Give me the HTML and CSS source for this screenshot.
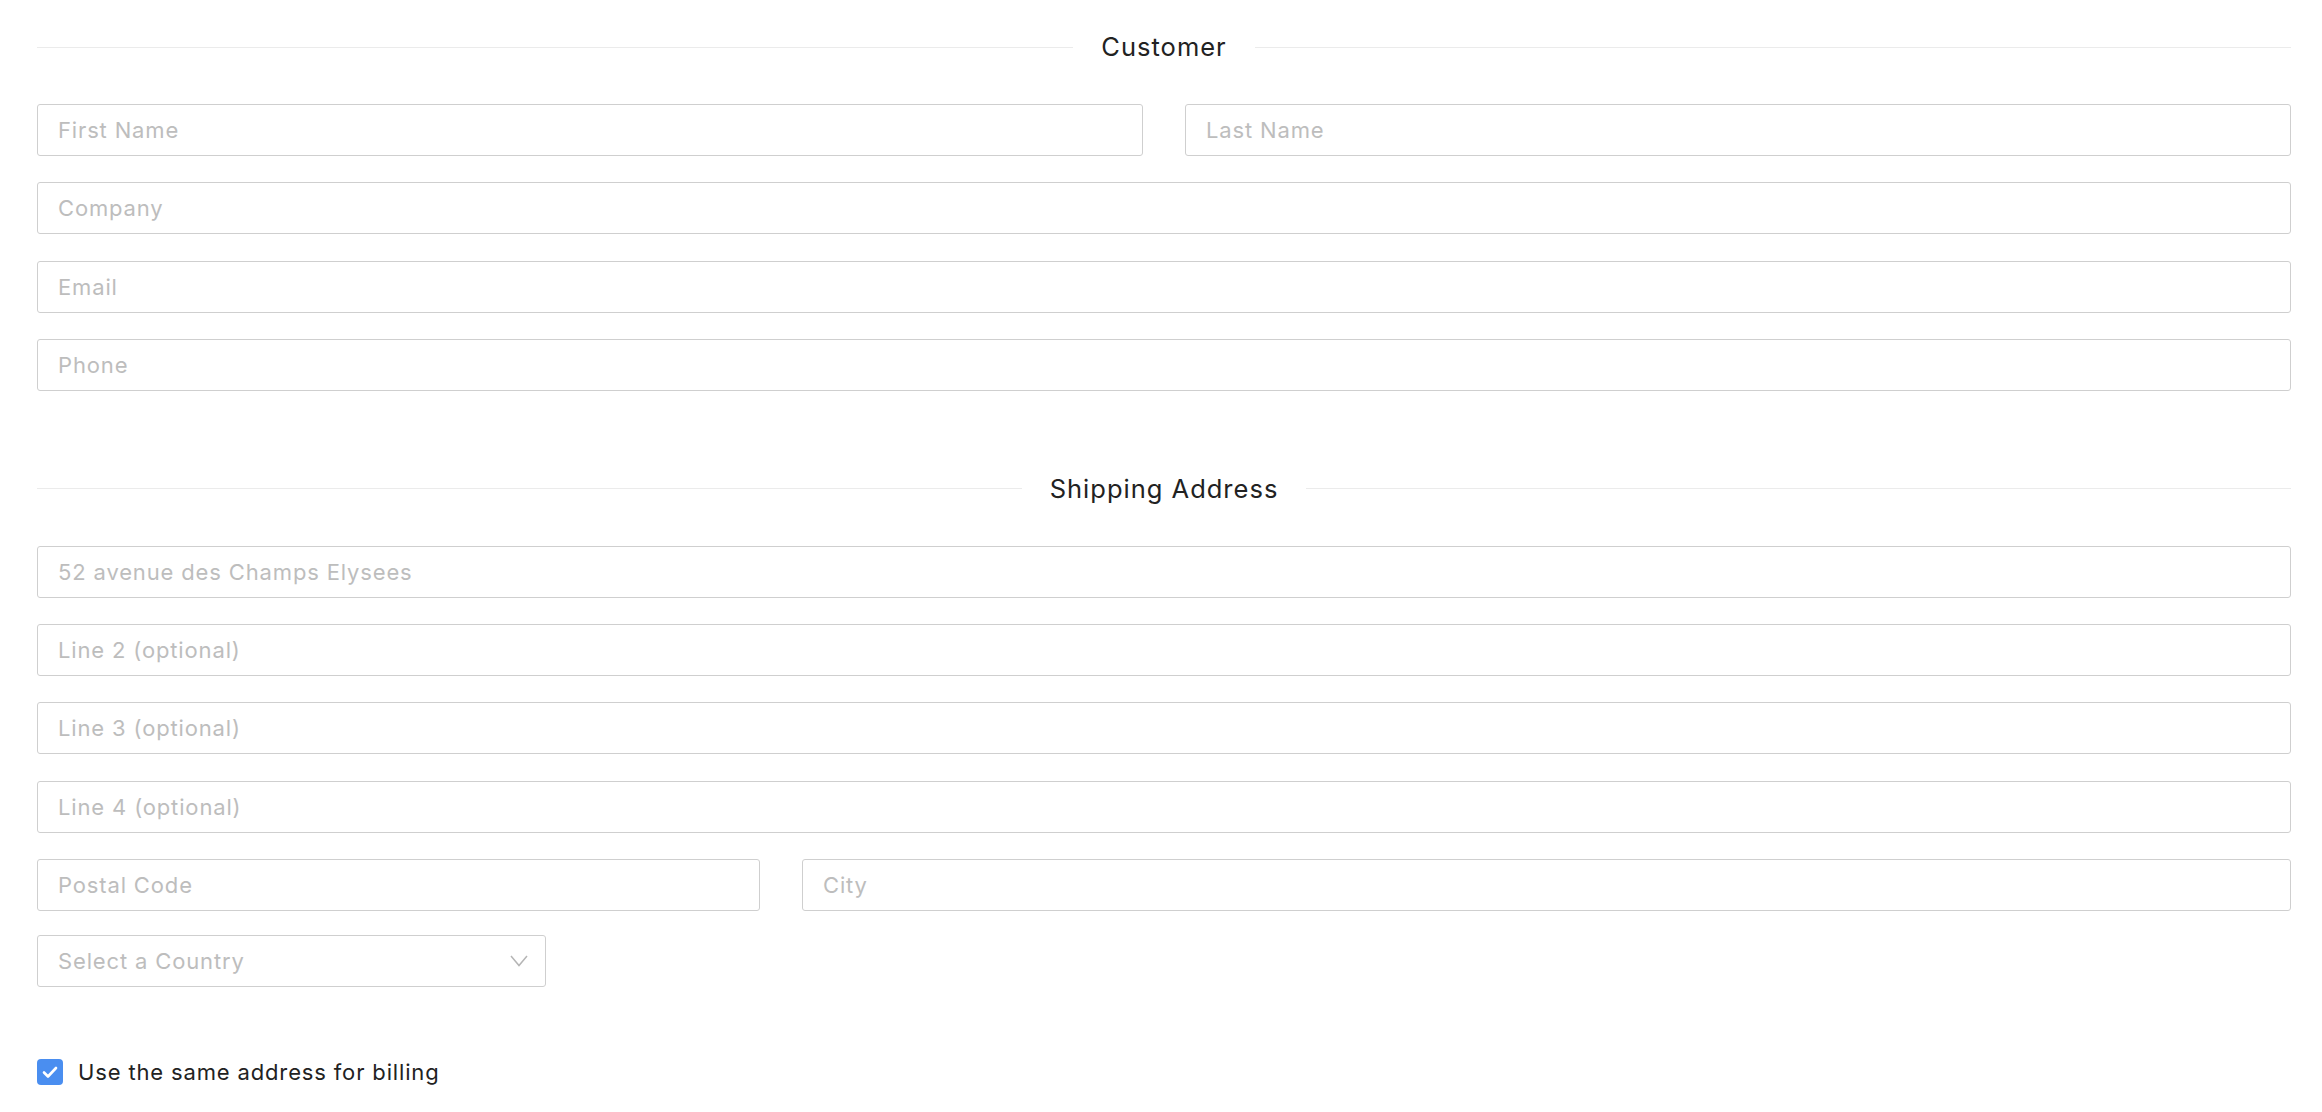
FILE: index.html
```html
<!DOCTYPE html>
<html lang="en">
<head>
<meta charset="utf-8">
<title>Customer form</title>
<link rel="stylesheet" href="styles.css">
</head>
<body>
<form class="page">
  <div class="section-title"><span class="rule"></span><span class="title-text">Customer</span><span class="rule"></span></div>
  <div class="fields">
    <div class="row two">
      <input class="field" type="text" placeholder="First Name">
      <input class="field" type="text" placeholder="Last Name">
    </div>
    <input class="field" type="text" placeholder="Company">
    <input class="field" type="text" placeholder="Email">
    <input class="field" type="text" placeholder="Phone">
  </div>

  <div class="section-title shipping"><span class="rule"></span><span class="title-text">Shipping Address</span><span class="rule"></span></div>
  <div class="fields">
    <input class="field" type="text" placeholder="52 avenue des Champs Elysees">
    <input class="field" type="text" placeholder="Line 2 (optional)">
    <input class="field" type="text" placeholder="Line 3 (optional)">
    <input class="field" type="text" placeholder="Line 4 (optional)">
    <div class="row postal">
      <input class="field" type="text" placeholder="Postal Code">
      <input class="field" type="text" placeholder="City">
    </div>
  </div>
  <div class="select-wrap">
    <select class="field select">
      <option>Select a Country</option>
    </select>
    <svg class="chevron" width="18" height="12" viewBox="0 0 18 12"><path d="M1 1 L9 10.5 L17 1" fill="none" stroke="#b5b5b5" stroke-width="1.5"/></svg>
  </div>

  <label class="check-row">
    <span class="checkbox"><svg width="26" height="26" viewBox="0 0 26 26"><path d="M7 13.5 L11 17.5 L19 9" fill="none" stroke="#fff" stroke-width="2.6" stroke-linecap="round" stroke-linejoin="round"/></svg></span>
    <span class="check-label">Use the same address for billing</span>
  </label>
</form>
</body>
</html>
```

FILE: styles.css
```css
html, body {
  margin: 0;
  padding: 0;
  background: #fff;
}

body {
  font-family: "Inter", "Helvetica Neue", Arial, sans-serif;
  color: #222;
}

.page {
  padding: 32px 31px 0 37px;
  display: flex;
  flex-direction: column;
}

.section-title {
  display: flex;
  align-items: center;
  height: 30px;
  gap: 28px;
  margin-bottom: 42px;
}

.section-title.shipping {
  margin-top: 83px;
}

.rule {
  flex: 1;
  height: 1px;
  background: #ebebeb;
}

.title-text {
  font-size: 25.5px;
  line-height: 30px;
  letter-spacing: 1px;
  color: #222;
  white-space: nowrap;
}

.fields {
  display: flex;
  flex-direction: column;
  gap: 26.3px;
}

.row {
  display: flex;
  gap: 42px;
}

.row.two > .field {
  flex: 1;
}

.row.postal > .field:first-child {
  width: 723px;
  flex: none;
}

.row.postal > .field:last-child {
  flex: 1;
}

.field {
  box-sizing: border-box;
  height: 52px;
  width: 100%;
  margin: 0;
  border: 1px solid #cfcfcf;
  border-radius: 3px;
  padding: 0 20px;
  font-family: "Inter", "Helvetica Neue", Arial, sans-serif;
  font-size: 22px;
  letter-spacing: 0.85px;
  color: #333;
  background: #fff;
  outline: none;
}

.field::placeholder {
  color: #bdbdbd;
  opacity: 1;
}

.select-wrap {
  position: relative;
  width: 509px;
  margin-top: 24px;
}

.select {
  appearance: none;
  -webkit-appearance: none;
  color: #bdbdbd;
}

.chevron {
  position: absolute;
  left: 473px;
  top: 20px;
  pointer-events: none;
}

.check-row {
  display: flex;
  align-items: center;
  gap: 15px;
  margin-top: 72px;
  height: 26px;
}

.checkbox {
  width: 26px;
  height: 26px;
  border-radius: 4px;
  background: #4a8ef0;
  display: flex;
}

.check-label {
  font-size: 22px;
  letter-spacing: 0.85px;
  color: #222;
}
```
